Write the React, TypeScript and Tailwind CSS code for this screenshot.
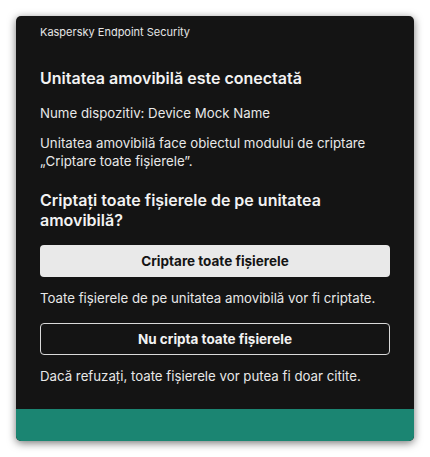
const App: React.FC = () => {
  return (
    <div
      className="w-[430px] h-[457px] bg-white p-4"
      style={{ fontFamily: "Inter, 'Noto Sans', sans-serif" }}
    >
      <div className="w-[398px] h-[425px] bg-[#141414] rounded-[5px] overflow-hidden flex flex-col shadow-[0_2px_8px_rgba(0,0,0,0.55)]">
        <div className="h-8 flex items-center px-6 text-[11px] text-[#e6e6e6]">
          Kaspersky Endpoint Security
        </div>

        <div className="flex-1 px-6 text-[#e8e8e8]">
          <h1 className="mt-[18px] text-[16px] leading-6 font-semibold text-[#f2f2f2]">
            Unitatea amovibilă este conectată
          </h1>
          <p className="mt-[13px] text-[13.25px] leading-5">
            Nume dispozitiv: Device Mock Name
          </p>
          <p className="mt-[11px] text-[13.25px] leading-[18px]">
            Unitatea amovibilă face obiectul modului de criptare
            <br />
            „Criptare toate fișierele”.
          </p>
          <h2 className="mt-[20px] text-[16px] leading-5 font-semibold text-[#f2f2f2]">
            Criptați toate fișierele de pe unitatea
            <br />
            amovibilă?
          </h2>
          <button className="mt-[15px] w-full h-8 rounded-[4px] bg-[#e9e9e9] text-[#141414] text-[13.5px] font-bold">
            Criptare toate fișierele
          </button>
          <p className="mt-[11px] text-[13.25px] leading-5">
            Toate fișierele de pe unitatea amovibilă vor fi criptate.
          </p>
          <button className="mt-[15px] w-full h-8 rounded-[4px] border border-[#d9d9d9] text-[#f2f2f2] text-[13.5px] font-bold">
            Nu cripta toate fișierele
          </button>
          <p className="mt-[11px] text-[13.25px] leading-5">
            Dacă refuzați, toate fișierele vor putea fi doar citite.
          </p>
        </div>

        <div className="h-8 bg-[#1b8572]" />
      </div>
    </div>
  );
};

export default App;
